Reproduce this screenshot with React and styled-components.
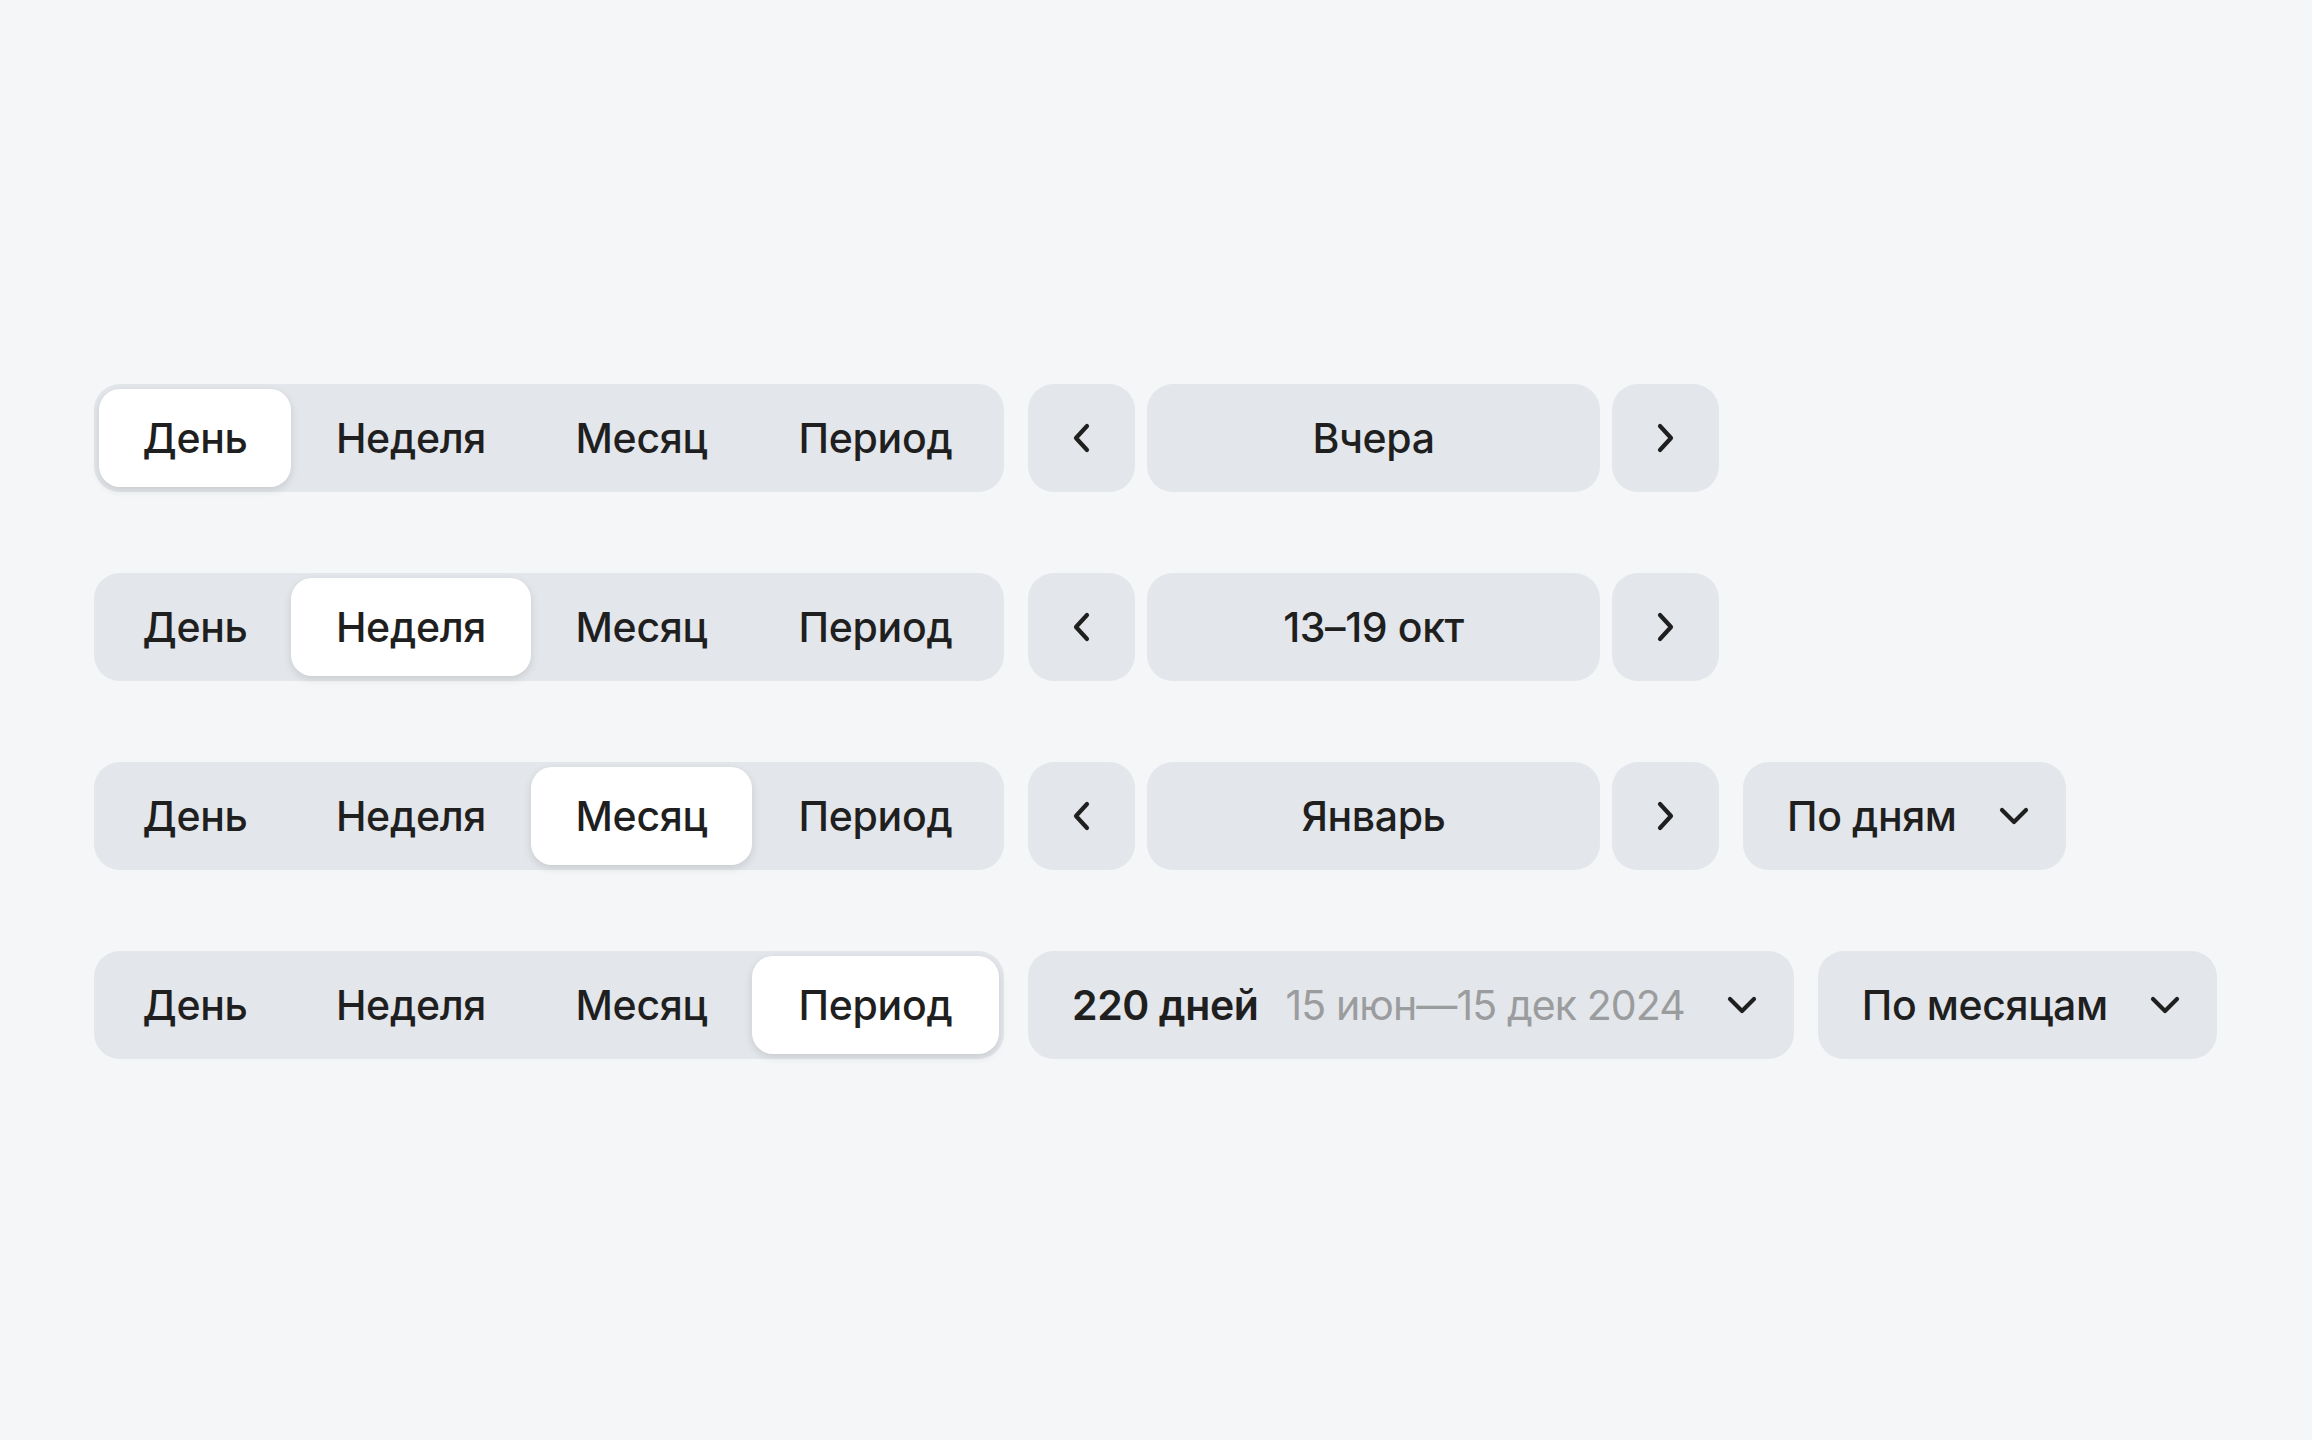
import React, { useState } from 'react';
import styled, { createGlobalStyle } from 'styled-components';

const GlobalStyle = createGlobalStyle`
  * {
    box-sizing: border-box;
    margin: 0;
    padding: 0;
  }
  body {
    font-family: Inter, 'Noto Sans', Arial, sans-serif;
    background-color: #f4f6f8;
    color: #1f1f1f;
    -webkit-font-smoothing: antialiased;
  }
`;

const Page = styled.div`
  min-height: 1440px;
  padding: 384px 0 0 94px;
  display: flex;
  flex-direction: column;
  gap: 81px;
`;

const Row = styled.div`
  display: flex;
  align-items: center;
  gap: 24px;
`;

const Segmented = styled.div`
  display: flex;
  height: 108px;
  padding: 5px;
  border-radius: 26px;
  background: #e3e6ea;
`;

const Segment = styled.button`
  width: ${p => p.w}px;
  height: 100%;
  border: none;
  border-radius: 21px;
  font-family: inherit;
  font-size: 41px;
  font-weight: 500;
  letter-spacing: -0.3px;
  color: #1f1f1f;
  cursor: pointer;
  background: ${p => (p.active ? '#ffffff' : 'transparent')};
  box-shadow: ${p => (p.active ? '0 3px 8px rgba(0, 0, 0, 0.12)' : 'none')};
`;

const NavGroup = styled.div`
  display: flex;
  gap: 12px;
`;

const Control = styled.button`
  height: 108px;
  border: none;
  border-radius: 26px;
  background: #e3e6ea;
  color: #1f1f1f;
  font-family: inherit;
  font-size: 41px;
  font-weight: 500;
  letter-spacing: -0.4px;
  display: flex;
  align-items: center;
  cursor: pointer;
`;

const ArrowButton = styled(Control)`
  width: 107px;
  justify-content: center;
`;

const DateButton = styled(Control)`
  width: 453px;
  justify-content: center;
`;

const Dropdown = styled(Control)`
  padding: 0 37px 0 44px;
  gap: 42px;
`;

const Label = styled.span`
  display: flex;
  align-items: baseline;
  gap: 27px;
  white-space: nowrap;
`;

const Strong = styled.span`
  font-weight: 600;
`;

const Muted = styled.span`
  font-weight: 400;
  letter-spacing: -0.9px;
  color: #9b9c9e;
`;

const Chevron = ({ dir }) => {
  const paths = {
    left: 'M17 3 L6 15 L17 27',
    right: 'M6 3 L17 15 L6 27',
    down: 'M3 4 L15 16 L27 4',
  };
  const size = dir === 'down' ? { width: 30, height: 20, viewBox: '0 0 30 20' } : { width: 23, height: 30, viewBox: '0 0 23 30' };
  return (
    <svg {...size} fill="none">
      <path d={paths[dir]} stroke="#1f1f1f" strokeWidth="4.2" strokeLinecap="round" strokeLinejoin="round" />
    </svg>
  );
};

const tabs = [
  { label: 'День', w: 192 },
  { label: 'Неделя', w: 240 },
  { label: 'Месяц', w: 221 },
  { label: 'Период', w: 247 },
];

function Tabs({ active, onSelect }) {
  return (
    <Segmented>
      {tabs.map((t, i) => (
        <Segment key={t.label} w={t.w} active={active === i} onClick={() => onSelect(i)}>
          {t.label}
        </Segment>
      ))}
    </Segmented>
  );
}

function Nav({ label }) {
  return (
    <NavGroup>
      <ArrowButton><Chevron dir="left" /></ArrowButton>
      <DateButton>{label}</DateButton>
      <ArrowButton><Chevron dir="right" /></ArrowButton>
    </NavGroup>
  );
}

export default function App() {
  const [sel, setSel] = useState([0, 1, 2, 3]);
  const pick = row => i => setSel(prev => prev.map((v, k) => (k === row ? i : v)));

  return (
    <>
      <GlobalStyle />
      <Page>
        <Row>
          <Tabs active={sel[0]} onSelect={pick(0)} />
          <Nav label="Вчера" />
        </Row>
        <Row>
          <Tabs active={sel[1]} onSelect={pick(1)} />
          <Nav label="13–19 окт" />
        </Row>
        <Row>
          <Tabs active={sel[2]} onSelect={pick(2)} />
          <Nav label="Январь" />
          <Dropdown>
            <Label>По дням</Label>
            <Chevron dir="down" />
          </Dropdown>
        </Row>
        <Row>
          <Tabs active={sel[3]} onSelect={pick(3)} />
          <Dropdown>
            <Label>
              <Strong>220 дней</Strong>
              <Muted>15 июн—15 дек 2024</Muted>
            </Label>
            <Chevron dir="down" />
          </Dropdown>
          <Dropdown>
            <Label>По месяцам</Label>
            <Chevron dir="down" />
          </Dropdown>
        </Row>
      </Page>
    </>
  );
}
